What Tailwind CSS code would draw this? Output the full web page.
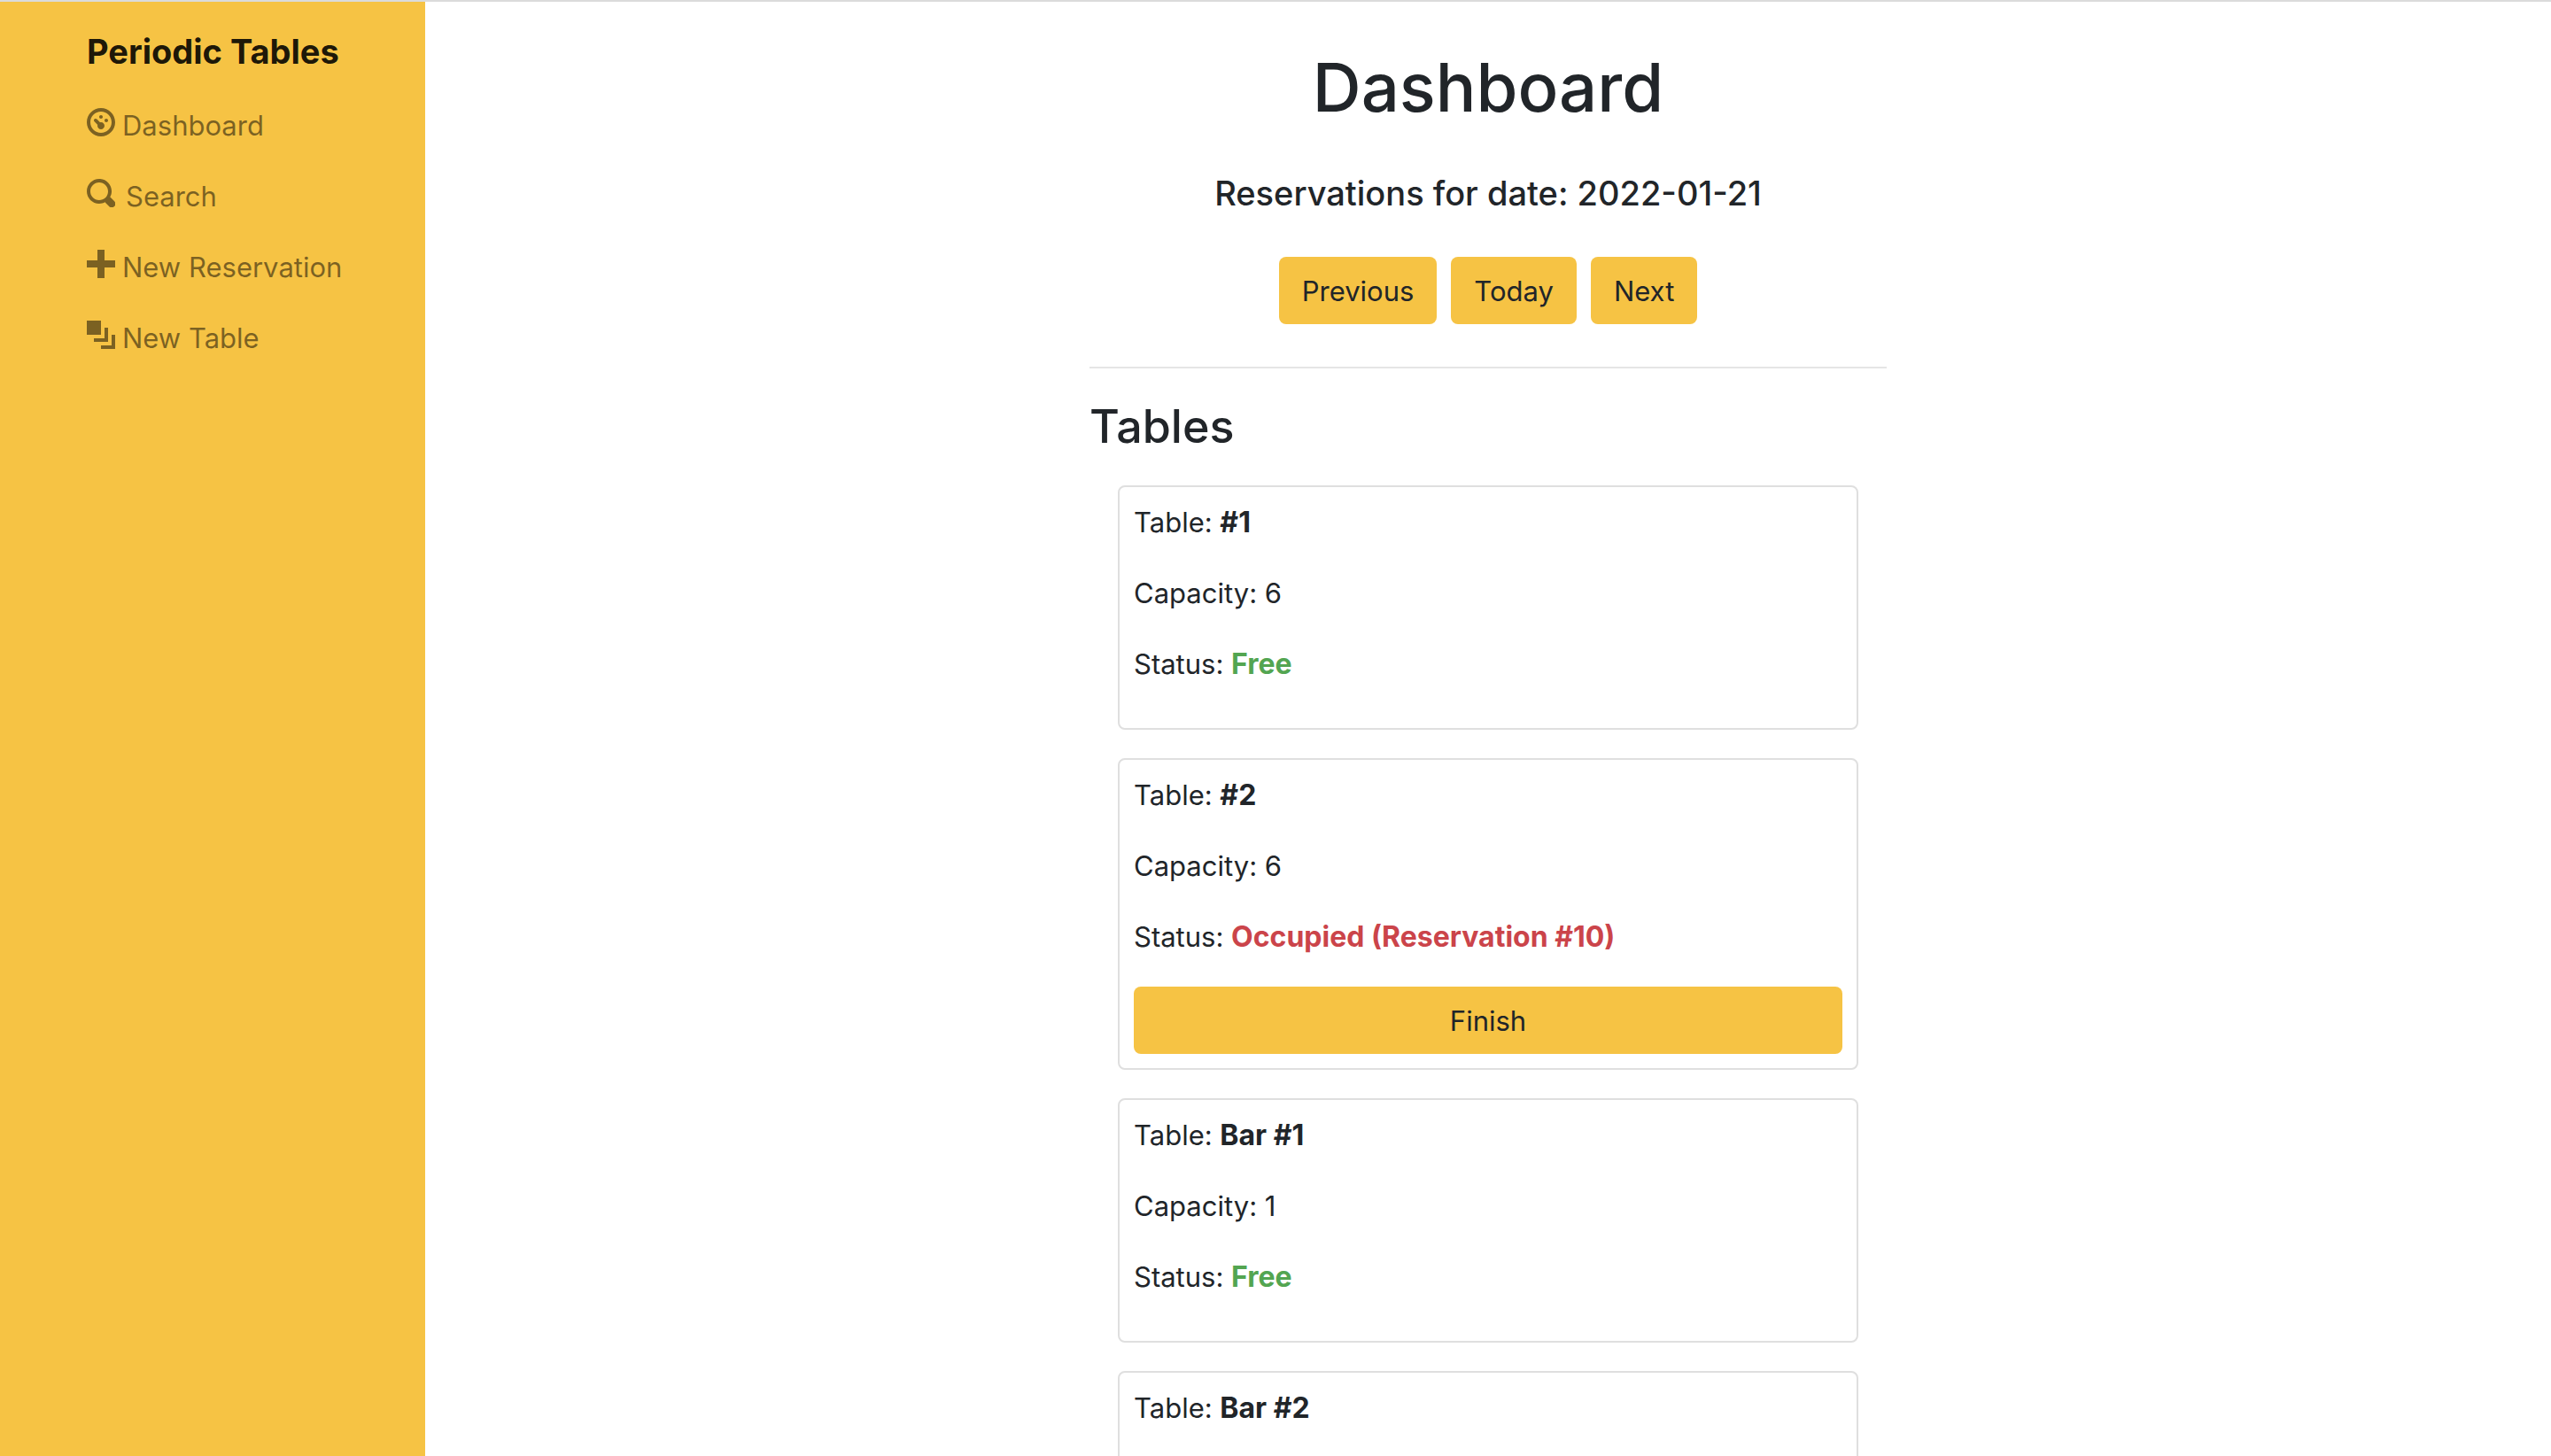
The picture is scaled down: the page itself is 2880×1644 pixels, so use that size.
<!DOCTYPE html>
<html lang="en">
<head>
<meta charset="utf-8">
<title>Periodic Tables</title>
<script src="https://cdn.jsdelivr.net/npm/@tailwindcss/browser@4"></script>
</head>
<body class="flex h-screen flex-col overflow-hidden border-t-2 border-[#dbdbdb] bg-white font-['Inter',sans-serif] text-[31px] leading-[48px] text-[#212529]">
  <div class="flex min-h-0 flex-1">
    <nav class="w-1/6 shrink-0 bg-[#f6c344] pt-8 pl-[98px]" aria-label="Main">
      <a href="#" class="block text-[38px] leading-[48px] font-bold whitespace-nowrap text-black/90">Periodic Tables</a>
      <ul class="mt-9 flex flex-col gap-8 whitespace-nowrap text-black/50">
        <li><a href="#" class="flex items-start gap-2">
          <svg class="mt-1 size-8 shrink-0" viewBox="0 0 8 8" fill="currentColor" aria-hidden="true"><path d="M4 0c-2.2 0-4 1.8-4 4s1.8 4 4 4 4-1.8 4-4-1.8-4-4-4zm0 1c1.66 0 3 1.34 3 3s-1.34 3-3 3-3-1.34-3-3 1.34-3 3-3zm0 1c-.28 0-.5.22-.5.5s.22.5.5.5.5-.22.5-.5-.22-.5-.5-.5zm-1.66 1a.5.5 0 0 0-.19.84l.91.91c-.02.08-.06.16-.06.25 0 .55.45 1 1 1s1-.45 1-1-.45-1-1-1c-.09 0-.17.04-.25.06l-.91-.91a.5.5 0 0 0-.44-.16.5.5 0 0 0-.06 0zm3.16 0c-.28 0-.5.22-.5.5s.22.5.5.5.5-.22.5-.5-.22-.5-.5-.5z"/></svg>
          Dashboard</a></li>
        <li><a href="#" class="flex items-start gap-3">
          <svg class="mt-1 size-8 shrink-0" viewBox="0 0 8 8" fill="currentColor" aria-hidden="true"><path d="M3.5 0c-1.93 0-3.5 1.57-3.5 3.5s1.57 3.5 3.5 3.5c.59 0 1.17-.14 1.66-.41a1 1 0 0 0 .13.13l1 1a1.02 1.02 0 1 0 1.44-1.44l-1-1a1 1 0 0 0-.16-.13c.27-.49.44-1.06.44-1.66 0-1.93-1.55-3.5-3.5-3.5zm0 1c1.39 0 2.5 1.11 2.5 2.5 0 .66-.24 1.27-.66 1.72-.01.01-.02.02-.03.03a1 1 0 0 0-.13.13c-.44.4-1.04.63-1.69.63-1.39 0-2.5-1.11-2.5-2.5s1.11-2.5 2.5-2.5z"/></svg>
          Search</a></li>
        <li><a href="#" class="flex items-start gap-2">
          <svg class="mt-1 size-8 shrink-0" viewBox="0 0 8 8" fill="currentColor" aria-hidden="true"><path d="M3 0v3h-3v2h3v3h2v-3h3v-2h-3v-3z"/></svg>
          New Reservation</a></li>
        <li><a href="#" class="flex items-start gap-2">
          <svg class="mt-1 size-8 shrink-0" viewBox="0 0 8 8" fill="currentColor" aria-hidden="true"><path d="M0 0v4h4v-4h-4zm5 2v3h-3v1h4v-4h-1zm2 2v3h-3v1h4v-4h-1z"/></svg>
          New Table</a></li>
      </ul>
    </nav>
    <main class="flex-1 overflow-y-auto pt-12">
      <div class="mx-auto w-3/8">
        <header class="flex flex-col items-center gap-12 border-b-2 border-black/10 pb-12 whitespace-nowrap">
          <h1 class="text-[76px] leading-[96px] font-medium">Dashboard</h1>
          <h4 class="text-[38px] leading-[48px] font-medium">Reservations for date: 2022-01-21</h4>
          <div class="flex gap-4">
            <button type="button" class="rounded-lg bg-[#f6c344] px-[26px] pt-[15px] pb-[13px]">Previous</button>
            <button type="button" class="rounded-lg bg-[#f6c344] px-[26px] pt-[15px] pb-[13px]">Today</button>
            <button type="button" class="rounded-lg bg-[#f6c344] px-[26px] pt-[15px] pb-[13px]">Next</button>
          </div>
        </header>
        <section class="pt-8">
          <h2 class="text-[52px] leading-[68px] font-medium">Tables</h2>
          <div class="flex flex-col gap-8 px-8 pt-8">
            <article class="rounded-lg border-2 border-[#dfdfdf] p-4">
              <p class="mb-8">Table: <strong class="text-[32px] font-bold">#1</strong></p>
              <p class="mb-8">Capacity: 6</p>
              <p class="mb-8">Status: <strong class="text-[32px] font-bold text-[#53a551]">Free</strong></p>
            </article>
            <article class="rounded-lg border-2 border-[#dfdfdf] p-4">
              <p class="mb-8">Table: <strong class="text-[32px] font-bold">#2</strong></p>
              <p class="mb-8">Capacity: 6</p>
              <p class="mb-8">Status: <strong class="text-[32px] font-bold text-[#cb444a]">Occupied (Reservation #10)</strong></p>
              <button type="button" class="block w-full rounded-lg bg-[#f6c344] px-[26px] pt-[15px] pb-[13px]">Finish</button>
            </article>
            <article class="rounded-lg border-2 border-[#dfdfdf] p-4">
              <p class="mb-8">Table: <strong class="text-[32px] font-bold">Bar #1</strong></p>
              <p class="mb-8">Capacity: 1</p>
              <p class="mb-8">Status: <strong class="text-[32px] font-bold text-[#53a551]">Free</strong></p>
            </article>
            <article class="rounded-lg border-2 border-[#dfdfdf] p-4">
              <p class="mb-8">Table: <strong class="text-[32px] font-bold">Bar #2</strong></p>
            </article>
          </div>
        </section>
      </div>
    </main>
  </div>
</body>
</html>
